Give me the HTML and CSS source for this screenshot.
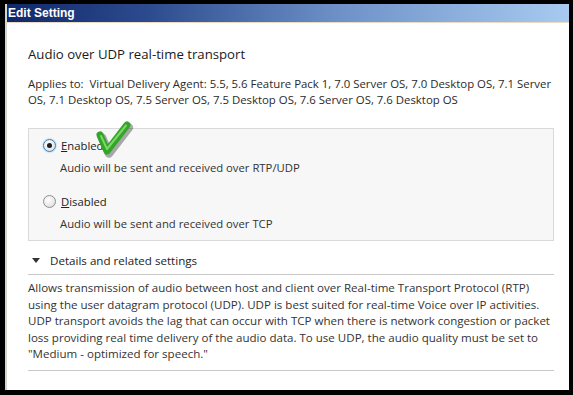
FILE: index.html
```html
<!DOCTYPE html>
<html>
<head>
<meta charset="utf-8">
<link rel="stylesheet" href="styles.css">
</head>
<body>
<div class="window">
  <div class="titlebar">Edit Setting</div>
  <div class="content">
    <h1 class="heading">Audio over UDP real-time transport</h1>
    <p class="applies">Applies to:&nbsp; Virtual Delivery Agent: 5.5, 5.6 Feature Pack 1, 7.0 Server OS, 7.0 Desktop OS, 7.1 Server OS, 7.1 Desktop OS, 7.5 Server OS, 7.5 Desktop OS, 7.6 Server OS, 7.6 Desktop OS</p>
    <div class="options">
      <div class="option">
        <div class="option-row">
          <span class="radio checked"><span class="dot"></span></span>
          <span class="label"><u>E</u>nabled</span>
          <svg class="check" width="42" height="38" viewBox="0 0 42 38">
            <path d="M7 15 L14 31 L34 5" fill="none" stroke="rgba(0,0,0,0.32)" stroke-width="8.5" stroke-linecap="round" stroke-linejoin="round" transform="translate(2,2.5)"/>
            <path d="M7 15 L14 31 L34 5" fill="none" stroke="#34a52a" stroke-width="7" stroke-linecap="round" stroke-linejoin="round"/>
            <path d="M8 16 L14 29 L33 5.5" fill="none" stroke="#7ad866" stroke-width="2" stroke-linecap="round" stroke-linejoin="round"/>
          </svg>
        </div>
        <div class="desc">Audio will be sent and received over RTP/UDP</div>
      </div>
      <div class="option">
        <div class="option-row">
          <span class="radio"></span>
          <span class="label"><u>D</u>isabled</span>
        </div>
        <div class="desc">Audio will be sent and received over TCP</div>
      </div>
    </div>
    <div class="details-head"><span class="tri"></span>Details and related settings</div>
    <p class="details">Allows transmission of audio between host and client over Real-time Transport Protocol (RTP) using the user datagram protocol (UDP). UDP is best suited for real-time Voice over IP activities. UDP transport avoids the lag that can occur with TCP when there is network congestion or packet loss providing real time delivery of the audio data. To use UDP, the audio quality must be set to "Medium - optimized for speech."</p>
  </div>
</div>
</body>
</html>
```
FILE: styles.css
```css
html, body {
  margin: 0;
  padding: 0;
  background: #000;
}
body {
  width: 573px;
  height: 395px;
  overflow: hidden;
  padding: 4px 4px 5px 5px;
  box-sizing: border-box;
}
.window {
  height: 386px;
  background: #fff;
  border-left: 2px solid #d6d3ce;
  display: flex;
  flex-direction: column;
  font-family: "Open Sans", "Noto Sans", sans-serif;
  color: #222;
}
.titlebar {
  height: 18px;
  border-bottom: 1px solid #e8dcc4;
  background: linear-gradient(to right, #10286a 0%, #2c4b8e 25%, #6f93c9 60%, #a8caf0 100%);
  color: #fff;
  font-family: "Liberation Sans", Arial, sans-serif;
  font-weight: bold;
  font-size: 12px;
  line-height: 18px;
  padding-left: 1px;
}
.content {
  padding: 0 12px 0 21px;
  margin-right: 3px;
}
.heading {
  margin: 22px 0 0 0;
  font-size: 13.2px;
  font-weight: normal;
  line-height: 18px;
  color: #1a1a1a;
}
.applies {
  margin: 13px 0 0 0;
  font-size: 11.4px;
  line-height: 16px;
  color: #2a2a2a;
}
.options {
  margin-top: 20px;
  border: 1px solid #d9d9d9;
  background: #f7f7f7;
  padding: 7px 0 0 14px;
  height: 104px;
}
.option + .option {
  margin-top: 16px;
}
.option-row {
  display: flex;
  align-items: center;
  height: 18px;
  position: relative;
}
.radio {
  width: 11px;
  height: 11px;
  border-radius: 50%;
  border: 1px solid #8e8f8f;
  background: radial-gradient(circle at 40% 35%, #fff 0%, #e4e4e4 70%, #d0d0d0 100%);
  display: flex;
  align-items: center;
  justify-content: center;
  margin-right: 5px;
}
.radio.checked {
  border-color: #3c7fb1;
  box-shadow: 0 0 2px #7fb4e0;
}
.dot {
  width: 5px;
  height: 5px;
  border-radius: 50%;
  background: #1f1f1f;
}
.label {
  font-size: 11.3px;
  color: #222;
}
.label u {
  text-decoration: underline;
}
.check {
  position: absolute;
  left: 50px;
  top: -16px;
}
.desc {
  margin-top: 6px;
  margin-left: 17px;
  font-size: 11.3px;
  color: #333;
  line-height: 16px;
}
.details-head {
  margin-top: 10px;
  display: flex;
  align-items: center;
  font-size: 11.6px;
  color: #222;
  height: 18px;
  padding-bottom: 5px;
  border-bottom: 1px solid #c8c8c8;
}
.tri {
  width: 0;
  height: 0;
  border-left: 4px solid transparent;
  border-right: 4px solid transparent;
  border-top: 5px solid #333;
  margin: 0 10px 0 4px;
}
.details {
  margin: 5px 0 0 0;
  font-size: 11.55px;
  line-height: 16.6px;
  color: #333;
  padding-bottom: 7px;
  border-bottom: 1px solid #c8c8c8;
}
```
